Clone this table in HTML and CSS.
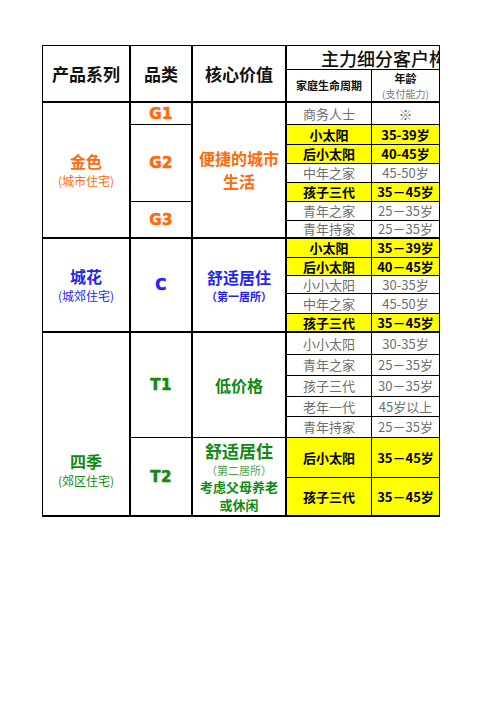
FILE: index.html
```html
<!DOCTYPE html>
<html lang="zh">
<head>
<meta charset="utf-8">
<title>产品系列</title>
<link rel="stylesheet" href="styles.css">
</head>
<body>
<div class="sheet">
  <div class="cell lc rs2 hd bb2">产品系列</div>
  <div class="cell lc rs2 hd bb2">品类</div>
  <div class="cell lc rs2 hd bb2">核心价值</div>
  <div class="cell cs2 title">主力细分客户构成分析</div>
  <div class="cell sub bb2">家庭生命周期</div>
  <div class="cell bb2"><span class="sub">年龄</span><span class="subnote">(支付能力)</span></div>

  <div class="cell lc rs7 bb2 orange"><span class="series">金色</span><span class="series-note">(城市住宅)</span></div>
  <div class="cell lc code orange">G1</div>
  <div class="cell lc rs7 bb2 orange"><span class="value two">便捷的城市<br>生活</span></div>
  <div class="cell grey">商务人士</div>
  <div class="cell grey mark">※</div>

  <div class="cell lc rs4 code orange">G2</div>
  <div class="cell hi">小太阳</div>
  <div class="cell hi">35-39岁</div>
  <div class="cell hi">后小太阳</div>
  <div class="cell hi">40-45岁</div>
  <div class="cell grey">中年之家</div>
  <div class="cell grey">45-50岁</div>
  <div class="cell hi">孩子三代</div>
  <div class="cell hi">35－45岁</div>

  <div class="cell lc rs2 bb2 code orange">G3</div>
  <div class="cell grey">青年之家</div>
  <div class="cell grey">25－35岁</div>
  <div class="cell grey bb2">青年持家</div>
  <div class="cell grey bb2">25－35岁</div>

  <div class="cell lc rs5 bb2 blue"><span class="series">城花</span><span class="series-note">(城郊住宅)</span></div>
  <div class="cell lc rs5 bb2 code blue">C</div>
  <div class="cell lc rs5 bb2 blue"><span class="value">舒适居住</span><span class="value-note">（第一居所）</span></div>
  <div class="cell hi">小太阳</div>
  <div class="cell hi">35－39岁</div>
  <div class="cell hi">后小太阳</div>
  <div class="cell hi">40－45岁</div>
  <div class="cell grey">小小太阳</div>
  <div class="cell grey">30-35岁</div>
  <div class="cell grey">中年之家</div>
  <div class="cell grey">45-50岁</div>
  <div class="cell hi bb2">孩子三代</div>
  <div class="cell hi bb2">35－45岁</div>

  <div class="cell lc rs7 bb2 green low"><span class="series">四季</span><span class="series-note">(郊区住宅)</span></div>
  <div class="cell lc rs5 code green">T1</div>
  <div class="cell lc rs5 green"><span class="value">低价格</span></div>
  <div class="cell grey">小小太阳</div>
  <div class="cell grey">30-35岁</div>
  <div class="cell grey">青年之家</div>
  <div class="cell grey">25－35岁</div>
  <div class="cell grey">孩子三代</div>
  <div class="cell grey">30－35岁</div>
  <div class="cell grey">老年一代</div>
  <div class="cell grey">45岁以上</div>
  <div class="cell grey">青年持家</div>
  <div class="cell grey">25－35岁</div>

  <div class="cell lc rs2 bb2 code green">T2</div>
  <div class="cell lc rs2 bb2 green second"><span class="value">舒适居住</span><span class="value-note light">（第二居所）</span><span class="value-small">考虑父母养老</span><span class="value-small">或休闲</span></div>
  <div class="cell hi">后小太阳</div>
  <div class="cell hi">35－45岁</div>
  <div class="cell hi bb2">孩子三代</div>
  <div class="cell hi bb2">35－45岁</div>
</div>
</body>
</html>
```

FILE: styles.css
```css
html, body {
  margin: 0;
  padding: 0;
  background: #ffffff;
}

body {
  font-family: "Noto Sans CJK SC", "Noto Sans", sans-serif;
  color: #000;
}

.sheet {
  display: grid;
  width: max-content;
  margin: 45px 0 0 42px;
  grid-template-columns: 88px 62px 94px 85px 68px;
  grid-template-rows: 24px 33px 22px 20px 19px 19px 19px 19px 18px 19px 18px 18px 20px 19px 22px 21px 21px 20px 21px 40px 39px;
  border-top: 1px solid #000;
  border-left: 1px solid #000;
}

.cell {
  box-sizing: border-box;
  display: flex;
  flex-direction: column;
  align-items: center;
  justify-content: center;
  text-align: center;
  border-right: 1px solid #000;
  border-bottom: 1px solid #000;
  font-size: 13px;
  line-height: 14px;
  white-space: nowrap;
}

.lc { border-right-width: 2px; }
.bb2 { border-bottom-width: 2px; }
.rs2 { grid-row: span 2; }
.rs4 { grid-row: span 4; }
.rs5 { grid-row: span 5; }
.rs7 { grid-row: span 7; }
.cs2 { grid-column: span 2; }

.hd {
  font-size: 17px;
  line-height: 20px;
  font-weight: 700;
  color: #111;
}

.title {
  align-items: flex-start;
  padding-left: 34px;
  font-size: 18px;
  line-height: 22px;
  font-weight: 500;
  color: #111;
  overflow: hidden;
}

.sub {
  font-size: 11px;
  line-height: 15px;
  font-weight: 700;
  color: #111;
}

.subnote {
  font-size: 10px;
  line-height: 15px;
  color: #777;
}

.grey {
  color: #6e6e6e;
  font-weight: 400;
}

.mark {
  font-size: 14px;
}

.hi {
  background: #ffff00;
  font-weight: 700;
  color: #000;
}

.orange { color: #ff6a0a; }
.blue { color: #2424f0; }
.green { color: #108a10; }

.code {
  font-family: "DejaVu Sans", "Liberation Sans", sans-serif;
  font-weight: 700;
  font-size: 15px;
  line-height: 18px;
  letter-spacing: 0.5px;
  -webkit-text-stroke: 0.6px currentColor;
}

.series {
  font-size: 16px;
  line-height: 22px;
  font-weight: 700;
}

.series-note {
  font-size: 12px;
  line-height: 18px;
}

.value {
  font-size: 16px;
  line-height: 22px;
  font-weight: 700;
}

.value.two {
  line-height: 23px;
}

.value-note {
  font-size: 11px;
  line-height: 16px;
  font-weight: 700;
}

.second .value {
  font-size: 17px;
  line-height: 22px;
}

.value-note.light {
  font-weight: 400;
  color: #4fa34f;
  line-height: 16px;
}

.value-small {
  font-size: 13px;
  line-height: 18px;
  font-weight: 700;
}

.low {
  padding-top: 91px;
}
```
